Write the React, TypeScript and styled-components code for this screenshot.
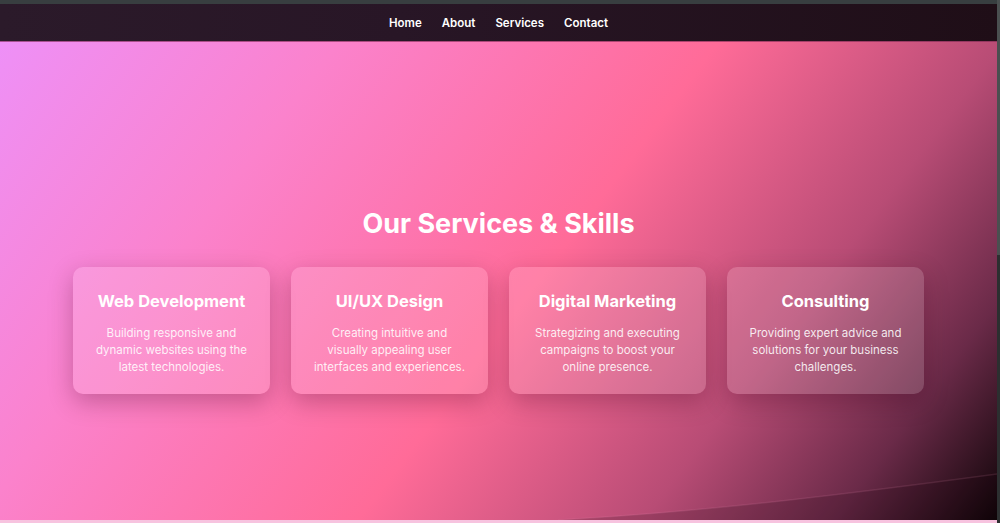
import React from 'react';
import styled, { createGlobalStyle } from 'styled-components';

const GlobalStyle = createGlobalStyle`
    html, body {
        margin: 0;
        padding: 0;
        background: #f7c3df;
        overflow: hidden;
    }
    body {
        font-family: "Inter", "DejaVu Sans", sans-serif;
    }
`;

const services = [
    {
        title: 'Web Development',
        text: 'Building responsive and dynamic websites using the latest technologies.',
    },
    {
        title: 'UI/UX Design',
        text: 'Creating intuitive and visually appealing user interfaces and experiences.',
    },
    {
        title: 'Digital Marketing',
        text: 'Strategizing and executing campaigns to boost your online presence.',
    },
    {
        title: 'Consulting',
        text: 'Providing expert advice and solutions for your business challenges.',
    },
];

export default function App() {
    return (
        <Window>
            <GlobalStyle />
            <Page>
                <TopStrip />
                <NavBar>
                    <NavLink href="#">Home</NavLink>
                    <NavLink href="#">About</NavLink>
                    <NavLink href="#">Services</NavLink>
                    <NavLink href="#">Contact</NavLink>
                </NavBar>
                <Hero>
                    <Heading>Our Services &amp; Skills</Heading>
                    <CardRow>
                        {services.map((s) => (
                            <Card key={s.title}>
                                <CardTitle>{s.title}</CardTitle>
                                <CardText>{s.text}</CardText>
                            </Card>
                        ))}
                    </CardRow>
                    <Wave viewBox="0 0 1000 60" preserveAspectRatio="none">
                        <path d="M560 60 C 700 52, 820 38, 1000 14 L1000 60 Z" fill="rgba(20,0,10,0.18)" />
                        <path d="M560 60 C 700 52, 820 38, 1000 14" stroke="rgba(255,160,200,0.12)" strokeWidth="1.5" fill="none" />
                    </Wave>
                </Hero>
                <NextSection />
            </Page>
            <ScrollRail>
                <ScrollThumb />
            </ScrollRail>
        </Window>
    );
}

const Window = styled.div`
    display: flex;
    height: 523px;
`;

const Page = styled.div`
    flex: 1;
    display: flex;
    flex-direction: column;
    min-width: 0;
`;

const ScrollRail = styled.div`
    width: 3px;
    background: #2c2f30;
    display: flex;
    flex-direction: column;
`;

const ScrollThumb = styled.div`
    height: 255px;
    background: #4a4f50;
`;

const TopStrip = styled.div`
    height: 4px;
    background: #383e40;
`;

const NavBar = styled.nav`
    height: 37px;
    display: flex;
    justify-content: center;
    align-items: center;
    gap: 20px;
    background: linear-gradient(90deg, #2b1a2a 0%, #281626 40%, #1f0e17 100%);
    box-shadow: 0 1px 0 rgba(120, 40, 80, 0.6);
    position: relative;
    z-index: 1;
`;

const NavLink = styled.a`
    color: #ffffff;
    text-decoration: none;
    font-size: 11.5px;
    font-weight: 600;
`;

const Hero = styled.section`
    position: relative;
    height: 479px;
    box-sizing: border-box;
    padding-top: 166px;
    display: flex;
    flex-direction: column;
    align-items: center;
    overflow: hidden;
    background: linear-gradient(127deg, #ee90f7 0%, #fb82cc 25%, #ff6b98 53%, #b84c75 74%, #6a2a48 88%, #0e0407 100%);
`;

const Heading = styled.h2`
    margin: 0 0 26px;
    color: #ffffff;
    font-size: 27px;
    font-weight: 700;
    line-height: 34px;
`;

const CardRow = styled.div`
    display: flex;
    gap: 21px;
    position: relative;
    z-index: 1;
`;

const Card = styled.div`
    width: 197px;
    height: 127px;
    box-sizing: border-box;
    padding: 24px 21px 20px;
    border-radius: 10px;
    background: rgba(255, 255, 255, 0.15);
    box-shadow: 0 8px 24px rgba(60, 0, 30, 0.28);
    text-align: center;
    color: #ffffff;
`;

const CardTitle = styled.h3`
    margin: 0 0 14px;
    font-size: 16.5px;
    font-weight: 700;
    line-height: 20px;
`;

const CardText = styled.p`
    margin: 0;
    font-size: 11.5px;
    line-height: 17px;
    color: rgba(255, 255, 255, 0.88);
`;

const Wave = styled.svg`
    position: absolute;
    left: 0;
    bottom: 0;
    width: 100%;
    height: 60px;
`;

const NextSection = styled.section`
    height: 3px;
    background: #f7c3df;
`;
